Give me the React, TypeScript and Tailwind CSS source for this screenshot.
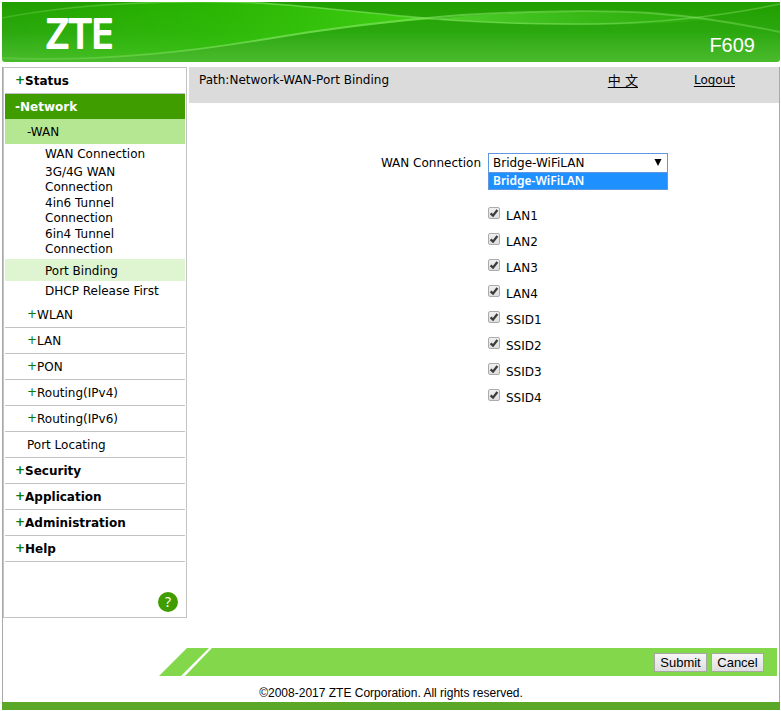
import React, { useState } from "react";

interface MenuItem {
  label: string;
  level: 1 | 2;
}

const wanPages = [
  "WAN Connection",
  "3G/4G WAN Connection",
  "4in6 Tunnel Connection",
  "6in4 Tunnel Connection",
];

const networkItems = ["WLAN", "LAN", "PON", "Routing(IPv4)", "Routing(IPv6)"];

const bottomItems: MenuItem[] = [
  { label: "Security", level: 1 },
  { label: "Application", level: 1 },
  { label: "Administration", level: 1 },
  { label: "Help", level: 1 },
];

const ports = ["LAN1", "LAN2", "LAN3", "LAN4", "SSID1", "SSID2", "SSID3", "SSID4"];

function MenuRow({ label, level }: MenuItem) {
  return (
    <li className="border-b border-[#c3c3c3]">
      <a
        href="#"
        className={
          level === 1
            ? "flex h-[25px] items-center pt-[2px] pl-[10px] font-bold"
            : "flex h-[25px] items-center pt-[2px] pl-[22px]"
        }
      >
        <span className="pb-[2px] text-[#087a08]">+</span>
        {label}
      </a>
    </li>
  );
}

function Header() {
  return (
    <header className="relative flex h-[60px] items-center justify-between overflow-hidden rounded-b-[3px] bg-linear-to-b from-[#219f00] via-[#2ba80e] to-[#4abb2c] pr-[25px] pl-[43px] text-white">
      {/* Wave decoration */}
      <svg
        className="absolute inset-0 h-full w-full"
        viewBox="0 0 778 60"
        preserveAspectRatio="none"
        fill="none"
        aria-hidden="true"
      >
        <defs>
          <linearGradient id="glow" x1="0" y1="0" x2="1" y2="0">
            <stop offset="0" stopColor="#2fc800" stopOpacity="0" />
            <stop offset="0.5" stopColor="#2fc404" stopOpacity="0.6" />
            <stop offset="1" stopColor="#42d016" />
          </linearGradient>
          <linearGradient id="glowRight" x1="0" y1="0" x2="1" y2="0">
            <stop offset="0" stopColor="#55d430" stopOpacity="0.9" />
            <stop offset="1" stopColor="#35bd15" stopOpacity="0.3" />
          </linearGradient>
          <linearGradient id="line" x1="0" y1="0" x2="1" y2="0">
            <stop offset="0" stopColor="#8ae06a" stopOpacity="0.25" />
            <stop offset="0.35" stopColor="#80e460" stopOpacity="0.7" />
            <stop offset="1" stopColor="#8ae06a" stopOpacity="0.4" />
          </linearGradient>
        </defs>
        <path
          d="M0 16C70 2 170 -3 258 1C320 5 380 13 433 17C390 20 340 26 258 38C180 51 90 60 0 56Z"
          fill="url(#glow)"
        />
        <path
          d="M433 17C500 9 600 8 648 11C680 13 700 15 714 17C670 22 590 24 520 22C480 20 460 19 433 17Z"
          fill="url(#glowRight)"
        />
        <path
          d="M0 16C70 2 170 -3 258 1C320 5 380 13 433 17C480 21 520 22 590 22C660 21 720 14 778 2"
          stroke="url(#line)"
          strokeWidth="1.5"
        />
        <path
          d="M0 56C90 60 180 51 258 38C340 24 420 16 460 13C530 9 600 8 648 11C700 15 740 22 778 30"
          stroke="url(#line)"
          strokeWidth="1.8"
        />
      </svg>
      <svg className="relative" width="90" height="60" viewBox="0 0 90 60" role="img" aria-label="ZTE">
        <text
          x="1"
          y="46"
          fill="#fff"
          stroke="#fff"
          strokeWidth="2"
          strokeLinejoin="round"
          className="font-['Noto_Sans',sans-serif] text-[40px] leading-none"
        >
          ZTE
        </text>
      </svg>
      <span className="relative mt-[26px] font-['Liberation_Sans',sans-serif] text-[20px] leading-6">F609</span>
    </header>
  );
}

function Sidebar() {
  return (
    <nav className="w-[184px] shrink-0 border border-[#c3c3c3] px-px">
      <ul>
        <MenuRow label="Status" level={1} />
        <li>
          <a href="#" className="flex h-[25px] items-center bg-[#3f9d00] pt-[2px] pl-[10px] font-bold text-white">
            -Network
          </a>
          <ul>
            <li>
              <a href="#" className="flex h-[25px] items-center bg-[#b5e792] pt-[2px] pl-[22px]">
                -WAN
              </a>
              <ul className="pb-px">
                {wanPages.map((page, index) => (
                  <li
                    key={page}
                    className={index === 0 ? "flex h-5 items-center pl-10" : "pt-px pr-[50px] pl-10"}
                  >
                    <a href="#">{page}</a>
                  </li>
                ))}
                <li className="mt-[2px] flex h-[22px] items-center bg-[#dff4d0] pt-[2px] pl-10">
                  <a href="#">Port Binding</a>
                </li>
                <li className="flex h-5 items-center pl-10">
                  <a href="#">DHCP Release First</a>
                </li>
              </ul>
            </li>
            {networkItems.map((item) => (
              <MenuRow key={item} label={item} level={2} />
            ))}
            <li className="border-b border-[#c3c3c3]">
              <a href="#" className="flex h-[25px] items-center pt-[2px] pl-[22px]">
                Port Locating
              </a>
            </li>
          </ul>
        </li>
        {bottomItems.map((item) => (
          <MenuRow key={item.label} label={item.label} level={item.level} />
        ))}
      </ul>
      <div className="flex justify-end pt-[30px] pr-[7px] pb-[5px]">
        <button
          type="button"
          aria-label="Help"
          className="flex size-5 items-center justify-center rounded-full bg-[#3f9d00] font-['Noto_Sans',sans-serif] text-[14px] leading-5 text-white"
        >
          ?
        </button>
      </div>
    </nav>
  );
}

export default function App() {
  const [checked, setChecked] = useState<string[]>(ports);

  const togglePort = (port: string) => {
    setChecked(checked.includes(port) ? checked.filter((p) => p !== port) : [...checked, port]);
  };

  return (
    <div className="bg-white pt-[2px] pr-px pl-[2px] font-['DejaVu_Sans','Noto_Sans_CJK_SC',sans-serif] text-[12px] leading-[15px] text-black">
      <Header />

      <form className="mt-[5px] border-x border-[#a9a9a9]" onSubmit={(e) => e.preventDefault()}>
        <div className="flex">
          <Sidebar />

          {/* Main Content */}
          <main className="ml-[2px] min-w-0 flex-1">
            <div className="flex h-9 items-start bg-[#dbdbdb] pt-[6px] pr-11 pl-[10px]">
              <span className="flex-1">Path:Network-WAN-Port Binding</span>
              <a href="#" className="mr-14 text-[13px] underline underline-offset-2">
                中 文
              </a>
              <a href="#" className="underline underline-offset-2">
                Logout
              </a>
            </div>

            <div className="mt-[50px] grid grid-cols-2">
              <label htmlFor="wan" className="pt-[3px] pr-[3px] text-right">
                WAN Connection
              </label>
              <div className="relative ml-1 w-[180px]">
                <select
                  id="wan"
                  className="block h-5 w-full appearance-none border border-[#5f97e0] bg-white pt-px pl-1 leading-[15px] outline-none"
                >
                  <option>Bridge-WiFiLAN</option>
                </select>
                <svg
                  className="pointer-events-none absolute top-[6px] right-[6px]"
                  width="8"
                  height="7"
                  viewBox="0 0 8 7"
                  aria-hidden="true"
                >
                  <path d="M0.5 0H7.5L4 7Z" fill="#000" />
                </svg>
                {/* Open option list */}
                <ul
                  role="listbox"
                  className="absolute top-5 left-0 w-full border border-t-0 border-[#5f97e0] bg-[#1e90ff] pb-px pl-1 font-['Noto_Sans',sans-serif] font-semibold text-white"
                >
                  <li role="option" aria-selected="true">
                    Bridge-WiFiLAN
                  </li>
                </ul>
              </div>

              <div className="col-start-2 mt-[29px] ml-1">
                {ports.map((port) => (
                  <div key={port} className="flex h-[26px] items-center">
                    <span className="relative mb-1 size-3">
                      <input
                        id={port}
                        type="checkbox"
                        checked={checked.includes(port)}
                        onChange={() => togglePort(port)}
                        className="peer block size-3 appearance-none rounded-[2px] border border-[#ababab] bg-linear-to-b from-[#f0f0f0] to-[#dedede]"
                      />
                      <svg
                        className="pointer-events-none absolute inset-0 hidden peer-checked:block"
                        width="12"
                        height="12"
                        viewBox="0 0 12 12"
                        fill="none"
                        aria-hidden="true"
                      >
                        <path d="M2.6 6.4L5 8.6L9.4 3" stroke="#3c3c3c" strokeWidth="2.3" />
                      </svg>
                    </span>
                    <label htmlFor={port} className="pt-[2px] pl-[6px]">
                      {port}
                    </label>
                  </div>
                ))}
              </div>
            </div>
          </main>
        </div>

        <div className="mt-[30px] mr-[2px] ml-[156px] flex h-7">
          <svg className="shrink-0" width="53" height="28" viewBox="0 0 53 28" aria-hidden="true">
            <path d="M0 28L28 0H50L22 28ZM26 28L53 0V28Z" fill="#82d84a" />
          </svg>
          <div className="flex flex-1 items-center justify-end gap-1 bg-[#82d84a] pr-[13px] font-['Liberation_Sans',sans-serif] text-[13px]">
            <button
              type="submit"
              className="h-[19px] w-[53px] border border-[#a6a6a6] bg-linear-to-b from-[#f6f6f6] to-[#dedede]"
            >
              Submit
            </button>
            <button
              type="button"
              className="h-[19px] w-[53px] border border-[#a6a6a6] bg-linear-to-b from-[#f6f6f6] to-[#dedede]"
            >
              Cancel
            </button>
          </div>
        </div>

        <p className="pt-[10px] pb-px text-center font-['Liberation_Sans',sans-serif]">
          ©2008-2017 ZTE Corporation. All rights reserved.
        </p>
      </form>
      <div className="h-2 bg-[#5ba829]" />
    </div>
  );
}
